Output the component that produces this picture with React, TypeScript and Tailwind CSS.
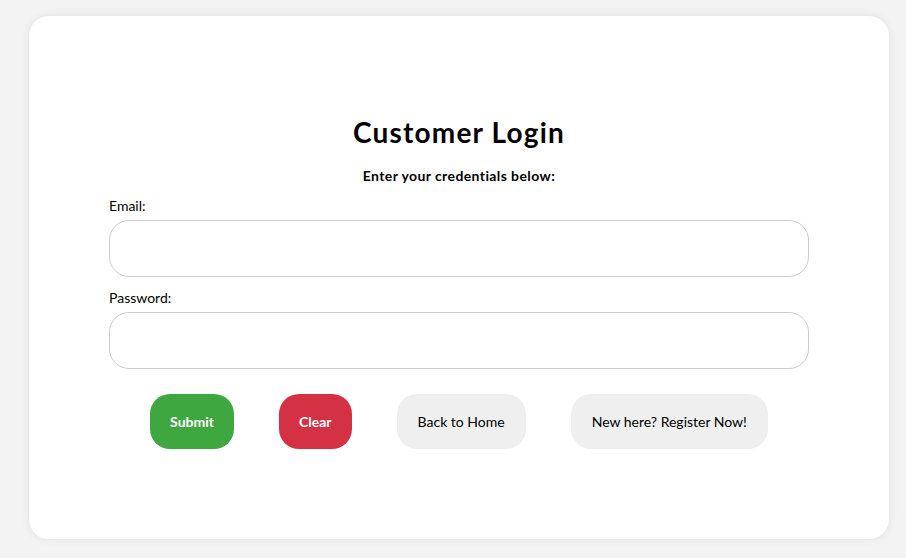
import React, { useState } from "react";

const Field = ({ label, type, value, onChange }) => (
  <div className="flex flex-col">
    <label className="text-[14px] leading-[18px] text-black mb-[5px]">{label}</label>
    <input
      type={type}
      value={value}
      onChange={(e) => onChange(e.target.value)}
      className="h-[57px] w-full rounded-[20px] border border-[#cccccc] bg-white px-4 outline-none"
    />
  </div>
);

const App: React.FC = () => {
  const [email, setEmail] = useState("");
  const [password, setPassword] = useState("");

  return (
    <div
      className="min-h-[558px] w-full bg-[#f3f3f3] pt-[16px] pl-[29px]"
      style={{ fontFamily: "Lato, 'Noto Sans', sans-serif" }}
    >
      <div className="w-[860px] h-[523px] rounded-[20px] bg-white shadow-[0_0_10px_rgba(0,0,0,0.08)] px-[80px] pt-[99px]">
        <h1 className="text-center text-[28px] leading-[34px] font-bold tracking-[1.2px] text-black">Customer Login</h1>
        <p className="mt-[18px] text-center text-[14px] leading-[18px] font-bold tracking-[0.4px] text-black">
          Enter your credentials below:
        </p>
        <div className="mt-[12px] flex flex-col gap-[12px]">
          <Field label="Email:" type="email" value={email} onChange={setEmail} />
          <Field label="Password:" type="password" value={password} onChange={setPassword} />
        </div>
        <div className="mt-[25px] flex justify-center gap-[45px]">
          <button className="h-[55px] px-[20px] rounded-[20px] bg-[#3fa73f] text-white text-[14px] font-bold">
            Submit
          </button>
          <button
            className="h-[55px] px-[20px] rounded-[20px] bg-[#d43244] text-white text-[14px] font-bold"
            onClick={() => {
              setEmail("");
              setPassword("");
            }}
          >
            Clear
          </button>
          <button className="h-[55px] px-[21px] rounded-[20px] bg-[#efefef] text-black text-[14px]">
            Back to Home
          </button>
          <button className="h-[55px] px-[21px] rounded-[20px] bg-[#efefef] text-black text-[14px]">
            New here? Register Now!
          </button>
        </div>
      </div>
    </div>
  );
};

export default App;
